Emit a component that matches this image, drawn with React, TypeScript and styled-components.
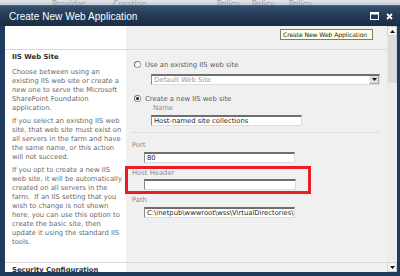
import React from "react";
import styled, { createGlobalStyle, css } from "styled-components";

const GlobalStyle = createGlobalStyle`
  html, body { margin: 0; padding: 0; background: #c9cfd7; }
  * { box-sizing: border-box; }
`;

const body = `"DejaVu Sans", Verdana, sans-serif`;

const Page = styled.div`
  width: 400px;
  height: 276px;
  display: flex;
  flex-direction: column;
  overflow: hidden;
  background: #c9cfd7;
`;

const Backdrop = styled.div`
  height: 5px;
  overflow: hidden;
  display: flex;
  align-items: flex-end;
  background: linear-gradient(#e3e6ea, #c6ccd4);
  font-family: ${body};
  font-size: 8px;
  color: #98a1ad;
`;

const BackdropText = styled.span<{ $left: number }>`
  margin-left: ${(p) => p.$left}px;
  line-height: 8px;
  margin-bottom: -4px;
  white-space: nowrap;
`;

const Dialog = styled.div`
  flex: 1;
  display: flex;
  flex-direction: column;
  background: #1e3a5c;
  padding: 0 3px 4px 0;
  min-height: 0;
`;

const TitleBar = styled.div`
  height: 21px;
  margin-right: -3px;
  display: flex;
  align-items: center;
  padding: 0 7px 0 9px;
  background: linear-gradient(#34506f, #223a56 50%, #1a2d44);
  border-top: 1px solid #4a6584;
`;

const Title = styled.div`
  flex: 1;
  font-family: "Liberation Sans", Arial, sans-serif;
  font-size: 10px;
  color: #ffffff;
  letter-spacing: 0.05px;
`;

const TitleIcons = styled.div`
  display: flex;
  align-items: center;
  gap: 7px;
`;

const DialogBody = styled.div`
  flex: 1;
  display: flex;
  margin-left: 5px;
  min-height: 0;
  overflow: hidden;
`;

const Content = styled.div`
  flex: 1;
  display: flex;
  flex-direction: column;
  background: #f0f0f0;
  overflow: hidden;
  font-family: ${body};
  font-size: 6.8px;
`;

const TopRow = styled.div`
  height: 23px;
  display: flex;
  flex: none;
`;

const WhiteCell = styled.div`
  width: 121px;
  flex: none;
  background: #ffffff;
`;

const ActionCell = styled.div`
  flex: 1;
  display: flex;
  justify-content: flex-end;
  align-items: flex-start;
  padding: 3px 14px 0 0;
`;

const TipButton = styled.div`
  height: 11px;
  width: 93px;
  border: 1px solid #7d7d6a;
  background: #ffffe4;
  color: #1e1e1e;
  font-family: ${body};
  font-size: 6.1px;
  letter-spacing: -0.1px;
  line-height: 9px;
  padding-left: 2px;
  white-space: nowrap;
  overflow: hidden;
`;

const Section = styled.div`
  display: flex;
  flex: none;
  border-top: 1px solid #d9d9d9;
`;

const LeftCol = styled.div`
  width: 121px;
  flex: none;
  background: #ffffff;
  padding: 3px 4px 15px 7px;
`;

const SectionTitle = styled.div`
  font-weight: bold;
  color: #2f2f2f;
  line-height: 9px;
  white-space: nowrap;
`;

const Para = styled.p<{ $gap: number }>`
  margin: ${(p) => p.$gap}px 0 0;
  color: #6a6a6a;
  line-height: 9px;
  white-space: nowrap;
`;

const RightCol = styled.div`
  flex: 1;
  padding: 10px 0 0 6px;
  display: flex;
  flex-direction: column;
  align-items: flex-start;
`;

const RadioRow = styled.div<{ $top: number }>`
  display: flex;
  align-items: center;
  gap: 4px;
  height: 9px;
  margin: ${(p) => p.$top}px 0 0 2px;
  color: #5b5b5b;
  white-space: nowrap;
`;

const Radio = styled.span<{ $checked?: boolean }>`
  width: 7px;
  height: 7px;
  border-radius: 50%;
  border: 1px solid #9a9a9a;
  border-top-color: #6e6e6e;
  border-left-color: #6e6e6e;
  background: #ffffff;
  display: flex;
  align-items: center;
  justify-content: center;
  ${(p) =>
    p.$checked &&
    css`
      &::after {
        content: "";
        width: 3px;
        height: 3px;
        border-radius: 50%;
        background: #1a1a1a;
      }
    `}
`;

const Label = styled.div<{ $top: number; $indent?: number }>`
  margin: ${(p) => p.$top}px 0 0 ${(p) => p.$indent ?? 0}px;
  color: #8c8c8c;
  line-height: 9px;
  white-space: nowrap;
`;

const TextBox = styled.div<{ $top: number; $indent: number; $width: number; $disabled?: boolean }>`
  margin: ${(p) => p.$top}px 0 0 ${(p) => p.$indent}px;
  width: ${(p) => p.$width}px;
  height: 11px;
  background: #ffffff;
  border-top: 2px solid #6f6f6f;
  border-left: 1px solid #8a8a8a;
  border-right: 1px solid #dcdcdc;
  border-bottom: 1px solid #dcdcdc;
  color: ${(p) => (p.$disabled ? "#9a9a9a" : "#2a2a2a")};
  line-height: 8px;
  padding-left: 2px;
  white-space: nowrap;
  overflow: hidden;
  display: flex;
  align-items: center;
`;

const SelectText = styled.span`
  flex: 1;
  overflow: hidden;
`;

const DropButton = styled.span`
  width: 10px;
  height: 9px;
  margin-top: -1px;
  flex: none;
  background: #dedede;
  border: 1px solid #a8a8a8;
  border-top-color: #f2f2f2;
  border-left-color: #f2f2f2;
  display: flex;
  align-items: center;
  justify-content: center;
`;

const Separator = styled.div`
  align-self: stretch;
  height: 1px;
  margin: 6px 7px 0 -1px;
  background: #dedede;
`;

const Highlight = styled.div`
  width: 186px;
  margin: 3px 0 0 -7px;
  border: 3px solid #ea1d25;
  padding: 0 0 1px 4px;
`;

const ScrollBar = styled.div`
  width: 10px;
  flex: none;
  display: flex;
  flex-direction: column;
  background-color: #f4f4f4;
  background-image: repeating-conic-gradient(#e4e4e4 0 25%, #f6f6f6 0 50%);
  background-size: 2px 2px;
`;

const ScrollButton = styled.div`
  height: 10px;
  flex: none;
  background: #f5f5f5;
  border: 1px solid #d2d2d2;
  display: flex;
  align-items: center;
  justify-content: center;
`;

const Thumb = styled.div`
  height: 47px;
  flex: none;
  background: #dcdcdc;
  border-left: 1px solid #e8e8e8;
  border-right: 1px solid #cfcfcf;
`;

const Track = styled.div`
  flex: 1;
`;

const Arrow = ({ down }: { down?: boolean }) => (
  <svg width="5" height="3" viewBox="0 0 5 3">
    <polygon points={down ? "0,0 5,0 2.5,3" : "0,3 5,3 2.5,0"} fill="#111" />
  </svg>
);

export default function App() {
  return (
    <>
      <GlobalStyle />
      <Page>
        <Backdrop>
          <BackdropText $left={52}>Provider</BackdropText>
          <BackdropText $left={28}>Creation</BackdropText>
          <BackdropText $left={70}>Policy</BackdropText>
          <BackdropText $left={12}>Policy</BackdropText>
          <BackdropText $left={14}>Policy</BackdropText>
        </Backdrop>
        <Dialog>
          <TitleBar>
            <Title>Create New Web Application</Title>
            <TitleIcons>
              <svg width="9" height="8" viewBox="0 0 9 8">
                <rect x="0.5" y="0.5" width="8" height="7" fill="none" stroke="#fff" strokeWidth="1" />
                <rect x="0.5" y="0.5" width="8" height="2" fill="#fff" />
              </svg>
              <svg width="7" height="7" viewBox="0 0 7 7">
                <path d="M1 1 L6 6 M6 1 L1 6" stroke="#fff" strokeWidth="1.8" />
              </svg>
            </TitleIcons>
          </TitleBar>
          <DialogBody>
            <Content>
              <TopRow>
                <WhiteCell />
                <ActionCell>
                  <TipButton>Create New Web Application</TipButton>
                </ActionCell>
              </TopRow>
              <Section>
                <LeftCol>
                  <SectionTitle>IIS Web Site</SectionTitle>
                  <Para $gap={6}>
                    Choose between using an
                    <br />
                    existing IIS web site or create a
                    <br />
                    new one to serve the Microsoft
                    <br />
                    SharePoint Foundation
                    <br />
                    application.
                  </Para>
                  <Para $gap={4}>
                    If you select an existing IIS web
                    <br />
                    site, that web site must exist on
                    <br />
                    all servers in the farm and have
                    <br />
                    the same name, or this action
                    <br />
                    will not succeed.
                  </Para>
                  <Para $gap={4}>
                    If you opt to create a new IIS
                    <br />
                    web site, it will be automatically
                    <br />
                    created on all servers in the
                    <br />
                    farm.&nbsp; If an IIS setting that you
                    <br />
                    wish to change is not shown
                    <br />
                    here, you can use this option to
                    <br />
                    create the basic site, then
                    <br />
                    update it using the standard IIS
                    <br />
                    tools.
                  </Para>
                </LeftCol>
                <RightCol>
                  <RadioRow $top={0}>
                    <Radio />
                    Use an existing IIS web site
                  </RadioRow>
                  <TextBox $top={5} $indent={19} $width={229} $disabled>
                    <SelectText>Default Web Site</SelectText>
                    <DropButton>
                      <Arrow down />
                    </DropButton>
                  </TextBox>
                  <RadioRow $top={9}>
                    <Radio $checked />
                    Create a new IIS web site
                  </RadioRow>
                  <Label $top={1} $indent={21}>
                    Name
                  </Label>
                  <TextBox $top={2} $indent={19} $width={151}>
                    Host-named site collections
                  </TextBox>
                  <Separator />
                  <Label $top={8}>Port</Label>
                  <TextBox $top={2} $indent={12} $width={151}>
                    80
                  </TextBox>
                  <Highlight>
                    <Label $top={0}>Host Header</Label>
                    <TextBox $top={1} $indent={12} $width={152} />
                  </Highlight>
                  <Label $top={2}>Path</Label>
                  <TextBox $top={2} $indent={12} $width={151}>
                    C:\inetpub\wwwroot\wss\VirtualDirectories\80
                  </TextBox>
                </RightCol>
              </Section>
              <Section>
                <LeftCol>
                  <SectionTitle>Security Configuration</SectionTitle>
                </LeftCol>
                <RightCol />
              </Section>
            </Content>
            <ScrollBar>
              <ScrollButton>
                <Arrow />
              </ScrollButton>
              <Thumb />
              <Track />
              <ScrollButton>
                <Arrow down />
              </ScrollButton>
            </ScrollBar>
          </DialogBody>
        </Dialog>
      </Page>
    </>
  );
}
